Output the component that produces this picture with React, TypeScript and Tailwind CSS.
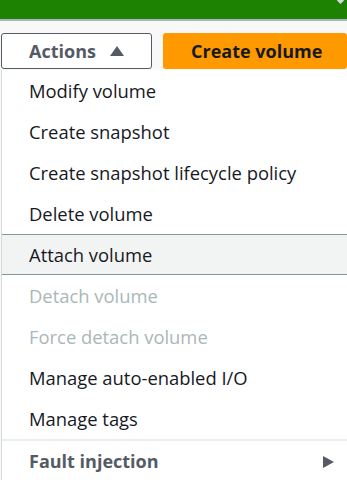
import React from 'react';

type Item = { label: string; disabled?: boolean; highlighted?: boolean };

const items: Item[] = [
  { label: 'Modify volume' },
  { label: 'Create snapshot' },
  { label: 'Create snapshot lifecycle policy' },
  { label: 'Delete volume' },
  { label: 'Attach volume', highlighted: true },
  { label: 'Detach volume', disabled: true },
  { label: 'Force detach volume', disabled: true },
  { label: 'Manage auto-enabled I/O' },
  { label: 'Manage tags' },
];

const App: React.FC = () => {
  return (
    <div className="w-[347px] h-[480px] overflow-hidden bg-[#f8f8f8] font-['Open_Sans',sans-serif] text-[18.4px] relative">
      {/* Header strip */}
      <div className="h-[21px] bg-[#1d8102] border-b-2 border-[#aab7b8] relative">
        <span className="absolute right-[4px] top-[-2px] w-[5px] h-[5px] bg-[#d5dbdb] rotate-45" />
      </div>

      {/* Buttons */}
      <div className="flex items-center gap-[11px] pt-[12px] pl-[1px]">
        <button className="w-[151px] h-[36px] rounded-[3px] border border-[#545b64] bg-white flex items-center justify-center gap-[14px] font-bold text-[#545b64] text-[18px]">
          <span>Actions</span>
          <svg width="14" height="10" viewBox="0 0 14 10">
            <polygon points="7,0 14,10 0,10" fill="#545b64" />
          </svg>
        </button>
        <button className="flex-1 h-[36px] rounded-[3px] bg-[#ff9900] font-bold text-[#16191f] text-left pl-[28px] text-[18px]">
          Create volume
        </button>
      </div>

      {/* Dropdown menu */}
      <div className="mt-[1px] ml-[1px] bg-white border-l border-[#d5dbdb]">
        {items.map((it) => (
          <div
            key={it.label}
            className={
              it.highlighted
                ? 'h-[41px] flex items-center pl-[27px] bg-[#f2f3f3] border-y border-[#879596] text-[#16191f]'
                : it.disabled
                ? 'h-[41px] flex items-center pl-[27px] text-[#aab7b8]'
                : 'h-[41px] flex items-center pl-[27px] text-[#16191f]'
            }
          >
            {it.label}
          </div>
        ))}
        <div className="h-[2px] bg-[#eaeded]" />
        <div className="h-[41px] flex items-center justify-between pl-[27px] pr-[13px] font-bold text-[#545b64] text-[18px]">
          <span>Fault injection</span>
          <svg width="11" height="12" viewBox="0 0 11 12">
            <polygon points="0,0 11,6 0,12" fill="#545b64" />
          </svg>
        </div>
      </div>
    </div>
  );
};

export default App;
